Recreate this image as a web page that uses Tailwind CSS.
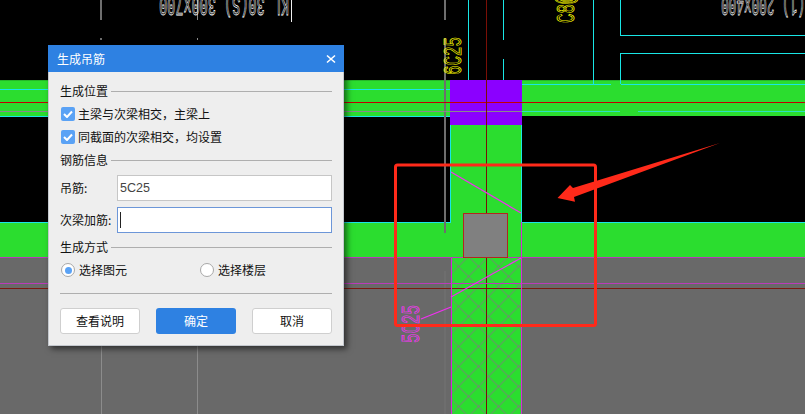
<!DOCTYPE html>
<html lang="zh">
<head>
<meta charset="utf-8">
<script src="https://cdn.jsdelivr.net/npm/@tailwindcss/browser@4"></script>
</head>
<body class="bg-black">
<div class="relative w-[805px] h-[414px] overflow-hidden bg-black font-['Noto_Sans_CJK_SC','Liberation_Sans',sans-serif] text-[12px] text-[#111]">
  <svg class="absolute inset-0" width="805" height="414" viewBox="0 0 805 414" shape-rendering="crispEdges">
    <defs>
      <pattern id="hatch" x="458.5" y="286.5" width="20" height="20" patternUnits="userSpaceOnUse">
        <path d="M0 0L20 20M-10 10L10 30M10 -10L30 10M0 20L20 0M-10 10L10 -10M10 30L30 10" stroke="#7d7d7d" stroke-width="1" fill="none" shape-rendering="auto"/>
      </pattern>
    </defs>
    <rect x="0" y="257" width="805" height="157" fill="#696969"/>
    <rect x="0" y="80" width="805" height="36" fill="#2bdd2f"/>
    <path d="M522 80.5H805M0 80.5H450" stroke="#25b829" fill="none"/>
    <rect x="0" y="222" width="805" height="35" fill="#2bdd2f"/>
    <rect x="451" y="116" width="71" height="298" fill="#2bdd2f"/>
    <rect x="451" y="258" width="70" height="156" fill="url(#hatch)"/>
    <rect x="450" y="80" width="72" height="45" fill="#8b00ff"/>
    <g stroke="#19e6e6" stroke-width="1" fill="none">
      <path d="M468.5 0V80M503.5 0V40M503.5 59V80M593.5 0V84M620.5 0V35.5H805M620.5 84V53.5H805"/>
      <path d="M522 84.5H611M621 84.5H805M0 89.5H450"/>
      <path d="M522 111.5H620M638 111.5H805" stroke="#2de0c0"/>
      <path d="M0 116.5H450M450.5 125V222.5H0M521.5 125V222.5H805"/>
    </g>
    <g stroke="#6e6e6e" stroke-width="1.5" fill="none">
      <path d="M445 0V20M445 38V233M445 271V414" />
      <path d="M101 0V20M101 38V40" />
    </g>
    <path d="M197.5 0V20M197.5 38V40M0 111.5H522" stroke="#8a8a8a" fill="none"/>
    <path d="M101 346V414M197.5 346V414" stroke="#8c8c8c" fill="none"/>
    <path d="M291.5 0V22" stroke="#eee" fill="none"/>
    <path d="M0 102.5H805" stroke="#c40000" fill="none"/>
    <path d="M0 288.5H805" stroke="#7c1a10" fill="none"/>
    <path d="M486.5 0V414" stroke="#7a0f06" fill="none"/>
    <path d="M0 283.5H805" stroke="#b93cb9" fill="none"/>
    <path d="M0 257.5H805" stroke="#b93cb9" fill="none"/>
    <path d="M451.5 258V414M521.5 222V414" stroke="#d62ad6" fill="none"/>
    <g stroke="#f030f0" stroke-width="1.3" fill="none" shape-rendering="auto">
      <path d="M451 172L521 213"/>
      <path d="M451 297L521 258"/>
      <path d="M421 319L451 307"/>
    </g>
    <rect x="463.5" y="213.5" width="44" height="44" fill="#808080" stroke="#b5261c"/>
    <g class="font-['Liberation_Mono',monospace]" fill="none" stroke-width="0.8" shape-rendering="auto">
      <text transform="translate(289 -3) rotate(180)" font-size="27" textLength="130" lengthAdjust="spacingAndGlyphs" stroke="#ffffff">KL 30(S) 300x700</text>
      <text transform="translate(805 -3) rotate(180)" font-size="27" textLength="84" lengthAdjust="spacingAndGlyphs" stroke="#ffffff">(1) 200x400</text>
      <text transform="translate(461 75) rotate(-90)" font-size="26" textLength="38" lengthAdjust="spacingAndGlyphs" stroke="#ffff00">6C25</text>
      <text transform="translate(574 23) rotate(-90)" font-size="26" textLength="57" lengthAdjust="spacingAndGlyphs" stroke="#ffff00">C8@200</text>
      <text transform="translate(419 343) rotate(-90)" font-size="26" textLength="38" lengthAdjust="spacingAndGlyphs" stroke="#ff30ff">5C25</text>
    </g>
    <rect x="395.5" y="165" width="200" height="160.5" rx="2" fill="none" stroke="#ff2a1a" stroke-width="3" shape-rendering="auto"/>
    <path d="M720 143L573 188L570 185L557.5 198L575 201.7L574 197Z" fill="#ff2a1a" shape-rendering="auto"/>
  </svg>

  <div class="absolute left-[48px] top-[45px] w-[296px] h-[301px] bg-[#eeeeee] border-x border-b border-[#c4c8ce] shadow-[3px_3px_6px_rgba(0,0,0,0.55)] flex flex-col box-border">
    <div class="h-[27px] -mx-px bg-[#2e81e2] text-white flex items-center justify-between pl-[9px] pr-[8px] shrink-0">
      <span>生成吊筋</span>
      <svg width="10" height="10" viewBox="0 0 10 10" fill="none" stroke="#fff" stroke-width="1.6"><path d="M1 1.5L9 8.5M9 1.5L1 8.5"/></svg>
    </div>
    <div class="px-[11px] pt-[9px] flex flex-col">
      <div class="h-5 flex items-center gap-[3px]"><span>生成位置</span><div class="flex-1 h-px bg-[#aeaeae]"></div></div>
      <div class="mt-[3px] h-5 flex items-center gap-[3px] pl-px">
        <span class="w-[14px] h-[14px] rounded-[2px] bg-[#5aa2f5] flex items-center justify-center"><svg width="10" height="8" viewBox="0 0 10 8" fill="none" stroke="#fff" stroke-width="2"><path d="M1 4L4 7L9 1.5"/></svg></span>
        <span>主梁与次梁相交&#xFF0C;主梁上</span>
      </div>
      <div class="mt-[3px] h-5 flex items-center gap-[3px] pl-px">
        <span class="w-[14px] h-[14px] rounded-[2px] bg-[#5aa2f5] flex items-center justify-center"><svg width="10" height="8" viewBox="0 0 10 8" fill="none" stroke="#fff" stroke-width="2"><path d="M1 4L4 7L9 1.5"/></svg></span>
        <span>同截面的次梁相交&#xFF0C;均设置</span>
      </div>
      <div class="mt-[3px] h-5 flex items-center gap-[3px]"><span>钢筋信息</span><div class="flex-1 h-px bg-[#aeaeae]"></div></div>
      <div class="mt-[5px] h-[26px] flex items-center">
        <span class="w-[57px]">吊筋:</span>
        <div class="flex-1 h-full bg-white border border-[#c6c6c6] flex items-center pl-[2px] font-['Liberation_Sans',sans-serif] text-[12.5px] text-[#444]">5C25</div>
      </div>
      <div class="mt-[6px] h-[26px] flex items-center">
        <span class="w-[57px]">次梁加筋:</span>
        <div class="flex-1 h-full bg-white border border-[#6c96d8] flex items-center pl-[2px]"><div class="w-px h-[16px] bg-[#222]"></div></div>
      </div>
      <div class="mt-[4px] h-5 flex items-center gap-[3px]"><span>生成方式</span><div class="flex-1 h-px bg-[#aeaeae]"></div></div>
      <div class="mt-[3px] h-5 flex items-center pl-px">
        <div class="w-[139px] flex items-center gap-1">
          <span class="w-[14px] h-[14px] rounded-full bg-white border border-[#a8a8a8] flex items-center justify-center"><span class="w-[7px] h-[7px] rounded-full bg-[#5aa2f5]"></span></span>
          <span>选择图元</span>
        </div>
        <div class="flex items-center gap-1">
          <span class="w-[14px] h-[14px] rounded-full bg-white border border-[#a8a8a8]"></span>
          <span>选择楼层</span>
        </div>
      </div>
      <div class="mt-[13px] h-px bg-[#aeaeae]"></div>
      <div class="mt-[14px] flex justify-between">
        <div class="w-[80px] h-[26px] rounded-[3px] bg-white border border-[#cfcfcf] flex items-center justify-center">查看说明</div>
        <div class="w-[80px] h-[26px] rounded-[3px] bg-[#2e81e2] text-white flex items-center justify-center">确定</div>
        <div class="w-[80px] h-[26px] rounded-[3px] bg-white border border-[#cfcfcf] flex items-center justify-center">取消</div>
      </div>
    </div>
  </div>
</div>
</body>
</html>
